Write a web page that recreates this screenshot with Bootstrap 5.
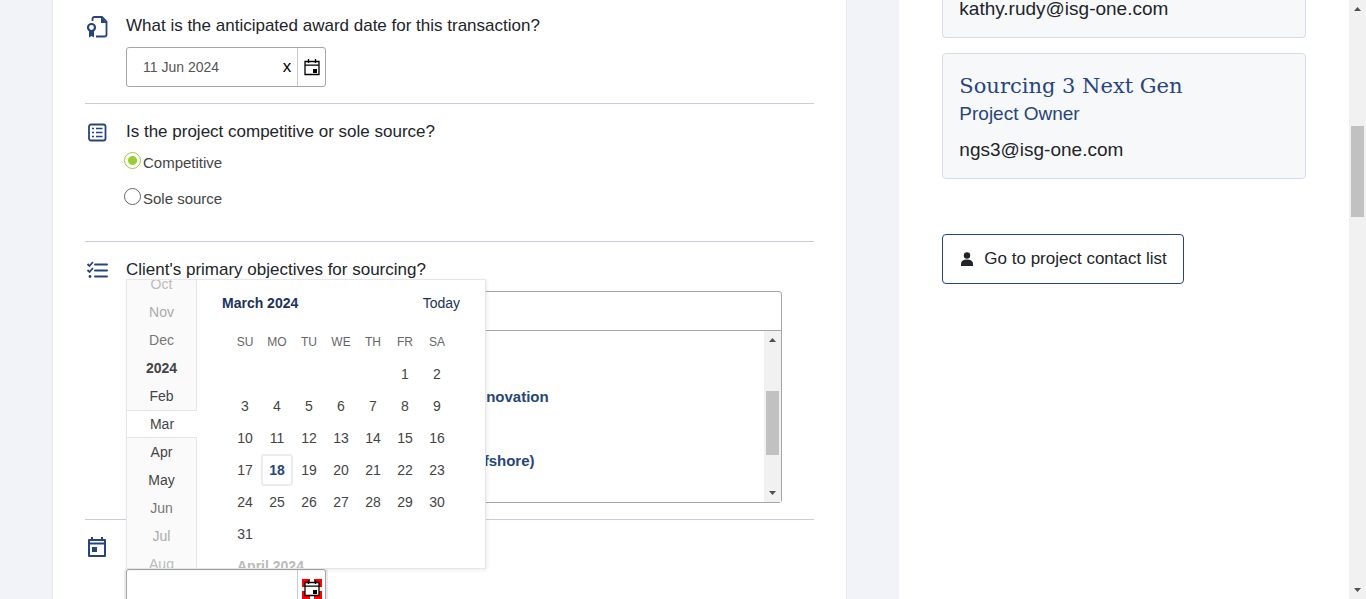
<!DOCTYPE html>
<html lang="en">
<head>
<meta charset="utf-8">
<meta name="viewport" content="width=device-width, initial-scale=1">
<title>Project details</title>
<link rel="stylesheet" href="https://cdn.jsdelivr.net/npm/bootstrap@5.3.0/dist/css/bootstrap.min.css">
<style>
  :root { --navy: #27457c; --ink: #212529; --rule: #c8ced9; --field: #a6a6a6; }
  body { font-family: "Liberation Sans", Arial, sans-serif; color: var(--ink); background: #fff; }
  .form-pane { background: #f2f3f8; padding: 0 52px; }
  .form-sheet { border: 1px solid #e6e8ec; border-width: 0 1px; padding: 0 32px; }
  .question { border-bottom: 1px solid var(--rule); padding: 16px 0; gap: 15px; }
  .question:first-child { padding-top: 14px; }
  .question:last-child { border-bottom: 0; }
  .question-icon { width: 24px; height: 24px; margin: 3px 0 0 2px; color: var(--navy); overflow: visible; }
  .question-title { font-size: 17px; line-height: 24px; min-height: 24px; margin: 0; display: block; }
  .date-field { width: 200px; height: 40px; margin-top: 9px; border: 1px solid var(--field); border-radius: 3px; background: #fff; }
  .date-field input { min-width: 0; border: 0; outline: 0; background: none; padding: 0 16px; font-size: 14px; color: #555; }
  .date-field button { flex-shrink: 0; border: 0; background: none; padding: 0; color: #000; }
  .date-field .clear { width: 20px; font-size: 17px; }
  .date-field .open { width: 28px; border-left: 1px solid #ccc; }
  .date-field .open svg { display: block; margin: auto; }
  .date-field.active { box-shadow: 0 0 0 2px #ebebeb; }
  .choices { padding: 1px 0 8px; }
  .choice { height: 36px; margin-left: -2px; gap: 2px; }
  .choice input { appearance: none; width: 17px; height: 17px; margin: 7px 0 0; border: 1px solid #666; border-radius: 50%; background: #fff; }
  .choice input:checked { border-color: #9acd32; background: radial-gradient(circle, #9acd32 4px, #fff 5px); }
  .choice label { font-size: 15px; line-height: 36px; color: #444; }
  .picker { margin: 9px 32px 0 0; border: 1px solid var(--field); border-radius: 3px; }
  .picker input { display: block; width: 100%; height: 39px; border: 0; border-bottom: 1px solid var(--field); outline: 0; background: none; }
  .picker-list { height: 171px; }
  .picker-list ul { padding: 50px 0 0 315px; color: var(--navy); font-size: 15px; font-weight: 700; line-height: 32px; }
  .picker-list li { height: 32px; margin-bottom: 32px; }
  .bar { width: 17px; background: #f1f1f1; }
  .bar svg { width: 17px; height: 17px; fill: #505050; }
  .bar .thumb { width: 13px; background: #c1c1c1; }
  .picker-list .thumb { margin-top: 43px; height: 64px; }
  .calendar { left: -1px; bottom: 100%; margin-bottom: 1px; width: 360px; height: 290px; z-index: 2; background: #fff; border: 1px solid #e6e6e6; box-shadow: 1px 1px 4px rgba(0,0,0,.08); color: #444; font-size: 14px; }
  .months { width: 70px; background: #fafafa; line-height: 28px; }
  .months span { flex: 0 0 28px; border-right: 1px solid #e6e6e6; text-align: center; }
  .months .current { background: #fff; border: 1px solid #e6e6e6; border-width: 1px 0; line-height: 26px; }
  .fade-1 { color: #777; } .fade-2 { color: #aaa; } .fade-3 { color: #bbb; }
  .month-head { height: 46px; padding: 0 25px; color: #1c325b; }
  .month-head a { color: #1c325b; text-decoration: none; }
  .days { width: 224px; margin-left: 32px; table-layout: fixed; border-collapse: separate; border-spacing: 0; text-align: center; }
  .days th, .days td { height: 32px; padding: 0; line-height: 30px; border: 1px solid transparent; }
  .days th { font-size: 12px; font-weight: 400; color: #666; }
  .days .today { border: 2px solid #ebebeb; border-radius: 3px; font-weight: 700; color: var(--navy); line-height: 28px; }
  .days .next-month { text-align: left; padding-left: 7px; font-weight: 700; color: #bbb; }
  .contact-pane { padding: 0 43px; }
  .contact { background: #f7f8fa; border: 1px solid #d5dce8; border-radius: 4px; padding: 17px 16px 15px; margin-bottom: 15px; font-size: 19px; line-height: 26px; }
  .contact.scrolled { border-top: 0; border-radius: 0 0 4px 4px; padding: 0 16px 19px; line-height: 18px; }
  .contact h2 { font-family: "Roboto Slab", "DejaVu Serif", serif; font-size: 21px; line-height: 30px; color: var(--navy); margin: 0; font-weight: 400; }
  .contact .role { color: var(--navy); margin-bottom: 10px; }
  .contact a, .contact-list { color: var(--ink); text-decoration: none; }
  .contact-list { margin-top: 55px; height: 50px; padding: 0 16px; gap: 9px; border: 1px solid var(--navy); border-radius: 4px; background: #fff; font-size: 17px; }
  .page-bar .thumb { margin-top: 109px; height: 91px; }
</style>
</head>
<body class="vh-100 overflow-hidden d-flex">

<svg class="d-none">
  <symbol id="date-icon" viewBox="0 0 16 17">
    <path fill="none" stroke="currentColor" stroke-width="1.3" d="M1 2.5h14v13H1zM1 6.2h14M4.5 0v4M11.500 0v4"/>
    <path fill="currentColor" d="M9 10h4v4H9z"/>
  </symbol>
</svg>

<div class="row g-0 flex-grow-1 h-100">
  <main class="col-8 form-pane h-100">
    <form class="form-sheet bg-white h-100">

      <section class="question d-flex">
        <svg class="question-icon flex-shrink-0" viewBox="0 0 24 24" fill="none" stroke="currentColor" stroke-width="1.800">
          <path d="M5.500 4V2Q5.500 0 7.500 0H15l4.500 4.500v13q0 2-2 2H9"/>
          <path fill="currentColor" stroke="none" d="M14 0v6h6z"/>
          <circle cx="4.500" cy="10.500" r="3.500" stroke-width="2.200"/>
          <path fill="currentColor" stroke="none" d="M2 13.500h5v7L4.500 19 2 20.500z"/>
        </svg>
        <div class="flex-grow-1">
          <label class="question-title" for="award">What is the anticipated award date for this transaction?</label>
          <div class="date-field d-flex">
            <input class="flex-grow-1" id="award" type="text" value="11 Jun 2024">
            <button class="clear" type="button" aria-label="Clear date">x</button>
            <button class="open" type="button" aria-label="Open calendar"><svg width="16" height="17"><use href="#date-icon"/></svg></button>
          </div>
        </div>
      </section>

      <section class="question d-flex">
        <svg class="question-icon flex-shrink-0" viewBox="0 0 24 24" fill="none" stroke="currentColor" stroke-width="1.800">
          <rect x="2" y="1.500" width="16.500" height="16" rx="2"/>
          <path stroke-width="1.600" d="M5 5.500h2M5 9.500h2M5 13.500h2M9 5.500h6.500M9 9.500h6.500M9 13.500h6.500"/>
        </svg>
        <div class="flex-grow-1">
          <p class="question-title">Is the project competitive or sole source?</p>
          <div class="choices">
            <div class="choice d-flex align-items-start"><input type="radio" name="kind" id="competitive" checked><label for="competitive">Competitive</label></div>
            <div class="choice d-flex align-items-start"><input type="radio" name="kind" id="sole"><label for="sole">Sole source</label></div>
          </div>
        </div>
      </section>

      <section class="question d-flex">
        <svg class="question-icon flex-shrink-0" viewBox="0 0 24 24" fill="none" stroke="currentColor" stroke-width="2">
          <path d="M8 3.500h12M8 9.500h12M8 15.500h12" stroke-linecap="round"/>
          <path stroke-width="1.800" d="M.500 3l2 2L6 1M.500 9l2 2L6 7"/><circle cx="3" cy="15.500" r="1.400" fill="currentColor" stroke="none"/>
        </svg>
        <div class="flex-grow-1">
          <label class="question-title" for="objectives">Client's primary objectives for sourcing?</label>
          <div class="picker">
            <input id="objectives" type="text">
            <div class="picker-list d-flex">
              <ul class="list-unstyled flex-grow-1 overflow-hidden m-0">
                <li>and innovation</li>
                <li>(on/offshore)</li>
              </ul>
              <div class="bar d-flex flex-column align-items-center" aria-hidden="true">
                <svg viewBox="0 0 17 17"><path d="M5 11l3.500-4L12 11z"/></svg>
                <div class="thumb"></div>
                <svg class="mt-auto" viewBox="0 0 17 17"><path d="M5 6l3.500 4L12 6z"/></svg>
              </div>
            </div>
          </div>
        </div>
      </section>

      <section class="question d-flex">
        <svg class="question-icon flex-shrink-0" viewBox="0 0 24 24" fill="none" stroke="currentColor" stroke-width="2">
          <path d="M2 1h16v16H2z" stroke-linejoin="round"/><path d="M2 4.500h16M5 -2v3M15 -2v3"/>
          <path fill="currentColor" stroke="none" d="M5 8h5v5H5z"/>
        </svg>
        <div class="flex-grow-1">
          <div class="question-title"></div>
          <div class="date-field active d-flex position-relative">
            <input class="flex-grow-1" type="text" aria-label="Date">
            <button class="open" type="button" aria-label="Open calendar">
              <svg width="20" height="20" viewBox="0 0 20 20">
                <path fill="red" d="M0 0h8v8H0zM12 0h8v8h-8zM0 12h8v8H0zM12 12h8v8h-8z"/>
                <path fill="#fff" d="M3 4h14v13H3z"/>
                <use href="#date-icon" x="2" y="1" width="16" height="17"/>
              </svg>
            </button>

            <div class="calendar position-absolute d-flex overflow-hidden">
              <div class="months d-flex flex-column justify-content-center">
                <span class="fade-3">Oct</span><span class="fade-2">Nov</span><span class="fade-1">Dec</span><span class="fw-bold">2024</span><span>Feb</span>
                <span class="current">Mar</span>
                <span>Apr</span><span>May</span><span class="fade-1">Jun</span><span class="fade-2">Jul</span><span class="fade-3">Aug</span>
              </div>
              <div class="flex-grow-1">
                <div class="month-head d-flex justify-content-between align-items-center"><b>March 2024</b><a href="#">Today</a></div>
                <table class="days">
                  <thead><tr><th>SU</th><th>MO</th><th>TU</th><th>WE</th><th>TH</th><th>FR</th><th>SA</th></tr></thead>
                  <tbody>
                    <tr><td></td><td></td><td></td><td></td><td></td><td>1</td><td>2</td></tr>
                    <tr><td>3</td><td>4</td><td>5</td><td>6</td><td>7</td><td>8</td><td>9</td></tr>
                    <tr><td>10</td><td>11</td><td>12</td><td>13</td><td>14</td><td>15</td><td>16</td></tr>
                    <tr><td>17</td><td class="today">18</td><td>19</td><td>20</td><td>21</td><td>22</td><td>23</td></tr>
                    <tr><td>24</td><td>25</td><td>26</td><td>27</td><td>28</td><td>29</td><td>30</td></tr>
                    <tr><td>31</td><td></td><td></td><td></td><td></td><td></td><td></td></tr>
                    <tr><td class="next-month" colspan="7">April 2024</td></tr>
                  </tbody>
                </table>
              </div>
            </div>
          </div>
        </div>
      </section>
    </form>
  </main>

  <aside class="col-4 contact-pane">
    <div class="contact scrolled"><a href="#">kathy.rudy@isg-one.com</a></div>
    <div class="contact">
      <h2>Sourcing 3 Next Gen</h2>
      <div class="role">Project Owner</div>
      <a href="#">ngs3@isg-one.com</a>
    </div>
    <button class="contact-list d-flex align-items-center" type="button">
      <svg width="16" height="16" viewBox="0 0 16 16" fill="currentColor"><circle cx="8" cy="4.500" r="3.200"/><path d="M2 15v-2q0-4.500 6-4.500t6 4.500v2z"/></svg>
      Go to project contact list
    </button>
  </aside>
</div>

<div class="bar page-bar flex-shrink-0 d-flex flex-column align-items-center" aria-hidden="true">
  <svg viewBox="0 0 17 17"><path d="M5 11l3.500-4L12 11z"/></svg>
  <div class="thumb"></div>
  <svg class="mt-auto" viewBox="0 0 17 17"><path d="M5 6l3.500 4L12 6z"/></svg>
</div>

<script src="https://cdn.jsdelivr.net/npm/bootstrap@5.3.0/dist/js/bootstrap.bundle.min.js"></script>
</body>
</html>
